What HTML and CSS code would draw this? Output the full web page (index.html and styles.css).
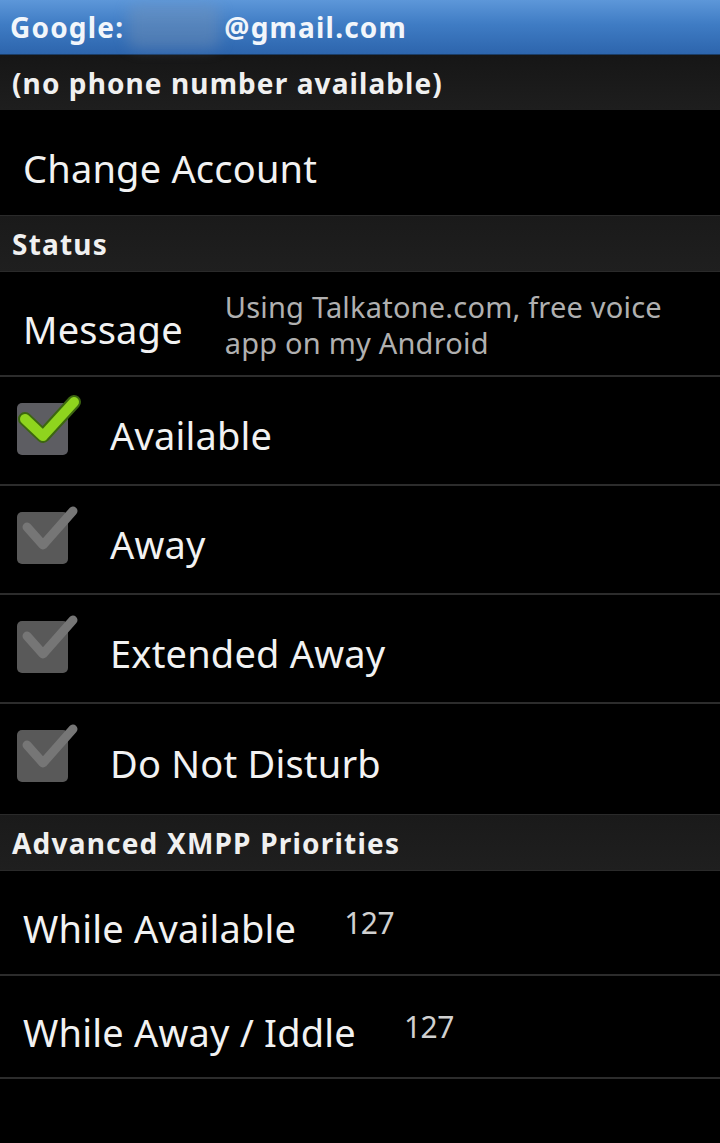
FILE: index.html
```html
<!DOCTYPE html>
<html>
<head>
<meta charset="utf-8">
<link rel="stylesheet" href="styles.css">
</head>
<body>
<div class="screen">
  <div class="titlebar">
    <span class="title-a">Google:</span><span class="blurred"></span><span class="title-b">@gmail.com</span>
  </div>
  <div class="subbar">(no phone number available)</div>

  <div class="row row-plain"><span class="label">Change Account</span></div>

  <div class="section">Status</div>

  <div class="row row-message">
    <span class="label">Message</span>
    <span class="summary">Using Talkatone.com, free voice<br>app on my Android</span>
  </div>

  <div class="row row-check">
    <svg class="checkbox" width="80" height="80" viewBox="0 0 80 80">
      <rect x="17" y="22" width="51" height="52" rx="5" fill="#5d5d62"/>
      <path d="M25 38 L43 55 L74 21" fill="none" stroke="#3c6610" stroke-width="14" stroke-linecap="round" stroke-linejoin="round"/>
      <path d="M25 38 L43 55 L74 21" fill="none" stroke="#8fd41e" stroke-width="10" stroke-linecap="round" stroke-linejoin="round"/>
    </svg>
    <span class="label">Available</span>
  </div>

  <div class="row row-check">
    <svg class="checkbox" width="80" height="80" viewBox="0 0 80 80">
      <rect x="17" y="22" width="51" height="52" rx="5" fill="#595959"/>
      <path d="M27 37 L43 55 L73 21" fill="none" stroke="#767676" stroke-width="9" stroke-linecap="round" stroke-linejoin="round"/>
    </svg>
    <span class="label">Away</span>
  </div>

  <div class="row row-check">
    <svg class="checkbox" width="80" height="80" viewBox="0 0 80 80">
      <rect x="17" y="22" width="51" height="52" rx="5" fill="#595959"/>
      <path d="M27 37 L43 55 L73 21" fill="none" stroke="#767676" stroke-width="9" stroke-linecap="round" stroke-linejoin="round"/>
    </svg>
    <span class="label">Extended Away</span>
  </div>

  <div class="row row-check row-last">
    <svg class="checkbox" width="80" height="80" viewBox="0 0 80 80">
      <rect x="17" y="22" width="51" height="52" rx="5" fill="#595959"/>
      <path d="M27 37 L43 55 L73 21" fill="none" stroke="#767676" stroke-width="9" stroke-linecap="round" stroke-linejoin="round"/>
    </svg>
    <span class="label">Do Not Disturb</span>
  </div>

  <div class="section">Advanced XMPP Priorities</div>

  <div class="row row-value">
    <span class="label">While Available</span><span class="value">127</span>
  </div>
  <div class="row row-value row-value2">
    <span class="label">While Away / Iddle</span><span class="value">127</span>
  </div>
</div>
</body>
</html>
```
FILE: styles.css
```css
html, body {
  margin: 0;
  padding: 0;
  background: #000;
}
.screen {
  width: 720px;
  height: 1143px;
  background: #000;
  font-family: "Noto Sans", "DejaVu Sans", sans-serif;
  color: #fff;
  overflow: hidden;
}
.titlebar {
  height: 55px;
  box-sizing: border-box;
  display: flex;
  align-items: center;
  padding-left: 10px;
  background: linear-gradient(#5d97d9 0%, #3f7cc4 45%, #2d65ad 100%);
  border-bottom: 1px solid #1b3d66;
  font-weight: bold;
  font-size: 28px;
  color: #f2f6fb;
  letter-spacing: 1.2px;
}
.blurred {
  display: inline-block;
  width: 92px;
  height: 44px;
  margin: 0 4px 0 4px;
  background: rgba(130, 150, 175, 0.35);
  filter: blur(7px);
  border-radius: 10px;
}
.subbar {
  height: 55px;
  box-sizing: border-box;
  display: flex;
  align-items: center;
  padding-left: 12px;
  background: linear-gradient(#161616, #1e1e1e);
  font-weight: bold;
  font-size: 28px;
  color: #f0f0f0;
  letter-spacing: 1.1px;
}
.section {
  height: 57px;
  box-sizing: border-box;
  display: flex;
  align-items: center;
  padding-left: 12px;
  background: linear-gradient(#1a1a1a, #1f1f1f);
  border-top: 1px solid #2a2a2a;
  border-bottom: 1px solid #2a2a2a;
  font-weight: bold;
  font-size: 28px;
  color: #f0f0f0;
  letter-spacing: 1.2px;
}
.row {
  display: flex;
  align-items: center;
  box-sizing: border-box;
  border-bottom: 2px solid #2c2c2c;
  padding-top: 10px;
}
.label {
  font-size: 38px;
  color: #f2f2f2;
  letter-spacing: 0.2px;
}
.row-plain {
  height: 105px;
  padding-left: 23px;
  border-bottom: none;
}
.row-message {
  height: 105px;
  padding-left: 23px;
}
.summary {
  margin-left: 42px;
  font-size: 29px;
  line-height: 36px;
  color: #b0b0b0;
  letter-spacing: 0.2px;
  padding-bottom: 8px;
}
.row-check {
  height: 109px;
  padding-left: 0;
  padding-top: 8px;
}
.row-last {
  height: 110px;
  border-bottom: none;
}
.checkbox {
  display: block;
  flex: none;
  width: 80px;
  height: 80px;
  overflow: visible;
  align-self: flex-start;
  margin-top: -4px;
}
.row-check .label {
  margin-left: 30px;
}
.row-value {
  height: 105px;
  padding-left: 23px;
}
.row-value2 {
  height: 103px;
}
.value {
  margin-left: 48px;
  font-size: 30px;
  color: #d0d0d0;
  letter-spacing: -0.5px;
  margin-bottom: 10px;
}
```
